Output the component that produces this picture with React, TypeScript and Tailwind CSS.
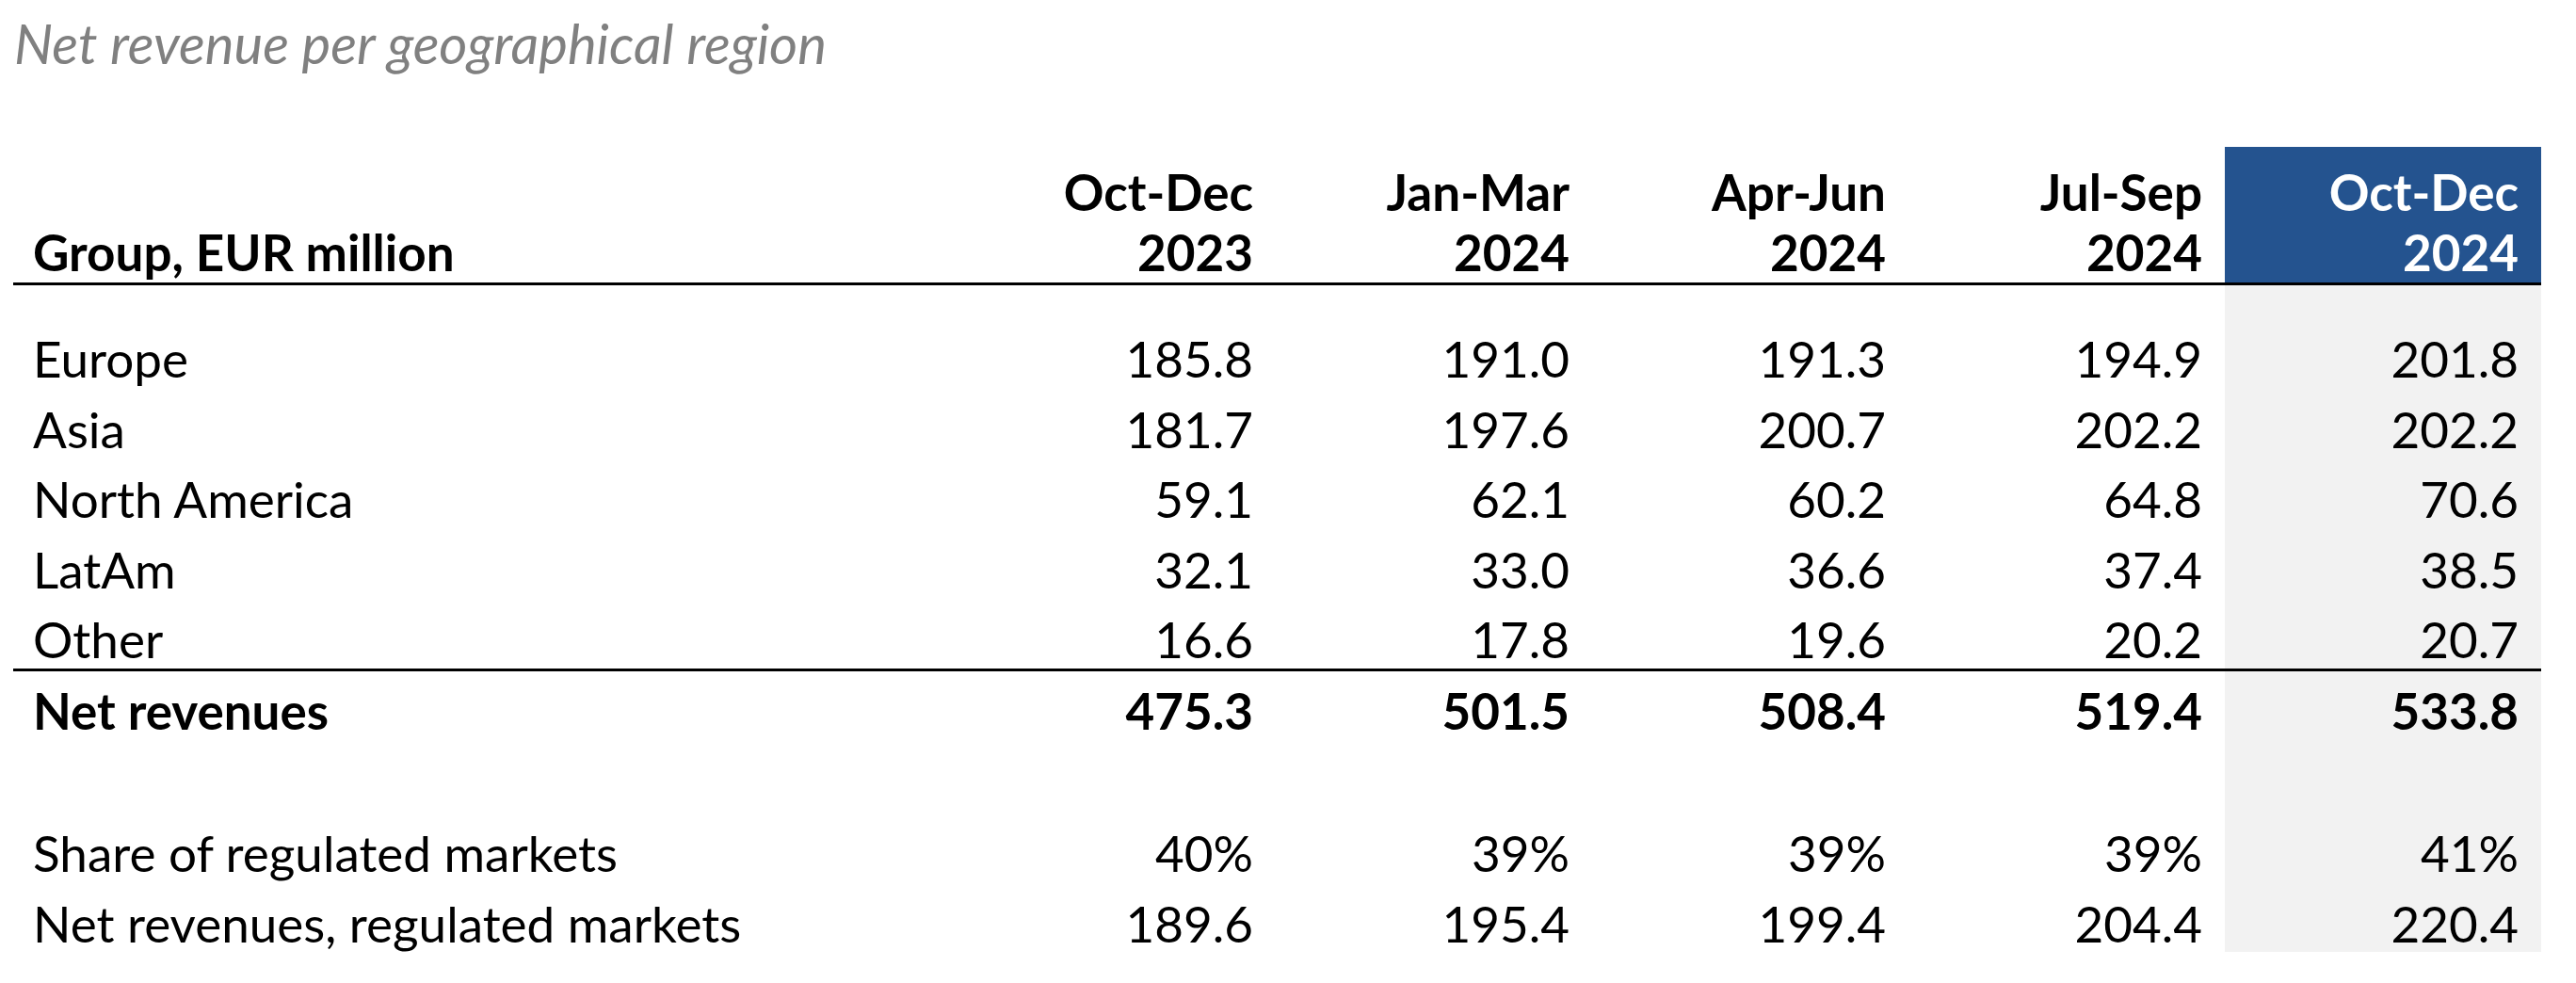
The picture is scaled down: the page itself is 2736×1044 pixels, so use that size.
import React from "react";

type RowProps = {
  label: string;
  values: string[];
  bold?: boolean;
  h: string;
  pt?: string;
  border?: string;
};

function Row({ label, values, bold, h, pt = "", border = "" }: RowProps) {
  const w = bold ? "font-bold" : "font-normal";
  return (
    <div className={`grid grid-cols-[1005px_repeat(5,336px)] grid-rows-1 ${h} ${border}`}>
      <div className={`pl-[21px] whitespace-nowrap ${pt} ${w}`}>{label}</div>
      {values.map((v, i) => (
        <div
          key={i}
          className={`text-right pr-[24px] whitespace-nowrap ${pt} ${w} ${i === 4 ? "bg-[#f2f2f2]" : ""}`}
        >
          {v}
        </div>
      ))}
    </div>
  );
}

function Spacer({ h }: { h: string }) {
  return (
    <div className={`grid grid-cols-[1005px_repeat(5,336px)] grid-rows-1 ${h}`}>
      <div />
      <div />
      <div />
      <div />
      <div />
      <div className="bg-[#f2f2f2]" />
    </div>
  );
}

const regions = [
  { label: "Europe", values: ["185.8", "191.0", "191.3", "194.9", "201.8"] },
  { label: "Asia", values: ["181.7", "197.6", "200.7", "202.2", "202.2"] },
  { label: "North America", values: ["59.1", "62.1", "60.2", "64.8", "70.6"] },
  { label: "LatAm", values: ["32.1", "33.0", "36.6", "37.4", "38.5"] },
];

const headers = [
  ["Oct-Dec", "2023"],
  ["Jan-Mar", "2024"],
  ["Apr-Jun", "2024"],
  ["Jul-Sep", "2024"],
  ["Oct-Dec", "2024"],
];

export default function App() {
  return (
    <div className="w-[2736px] h-[1044px] bg-white text-black font-['Lato',sans-serif] overflow-hidden">
      <div className="ml-[14px] pt-[10px]">
        <div className="pl-[1px] text-[58px] leading-[72px] italic text-[#808080] whitespace-nowrap">
          Net revenue per geographical region
        </div>

        <div className="mt-[74px] w-[2685px] text-[53px] leading-[74.5px]">
          {/* header */}
          <div className="grid grid-cols-[1005px_repeat(5,336px)] grid-rows-1 h-[147px] border-b-[3px] border-black leading-[64px] font-bold">
            <div className="pl-[21px] self-end whitespace-nowrap">Group, EUR million</div>
            {headers.map((hd, i) => (
              <div
                key={i}
                className={`text-right pr-[24px] pt-[16px] ${i === 4 ? "bg-[#24538f] text-white" : ""}`}
              >
                <div>{hd[0]}</div>
                <div>{hd[1]}</div>
              </div>
            ))}
          </div>

          <Spacer h="h-[41px]" />
          {regions.map((r) => (
            <Row key={r.label} label={r.label} values={r.values} h="h-[74.5px]" />
          ))}
          <Row label="Other" values={["16.6", "17.8", "19.6", "20.2", "20.7"]} h="h-[68px]" />
          <Row
            label="Net revenues"
            values={["475.3", "501.5", "508.4", "519.4", "533.8"]}
            bold
            h="h-[82.5px]"
            pt="pt-[5px]"
            border="border-t-[3px] border-black"
          />
          <Spacer h="h-[76.5px]" />
          <Row
            label="Share of regulated markets"
            values={["40%", "39%", "39%", "39%", "41%"]}
            h="h-[74.5px]"
          />
          <Row
            label="Net revenues, regulated markets"
            values={["189.6", "195.4", "199.4", "204.4", "220.4"]}
            h="h-[67.5px]"
          />
        </div>
      </div>
    </div>
  );
}
